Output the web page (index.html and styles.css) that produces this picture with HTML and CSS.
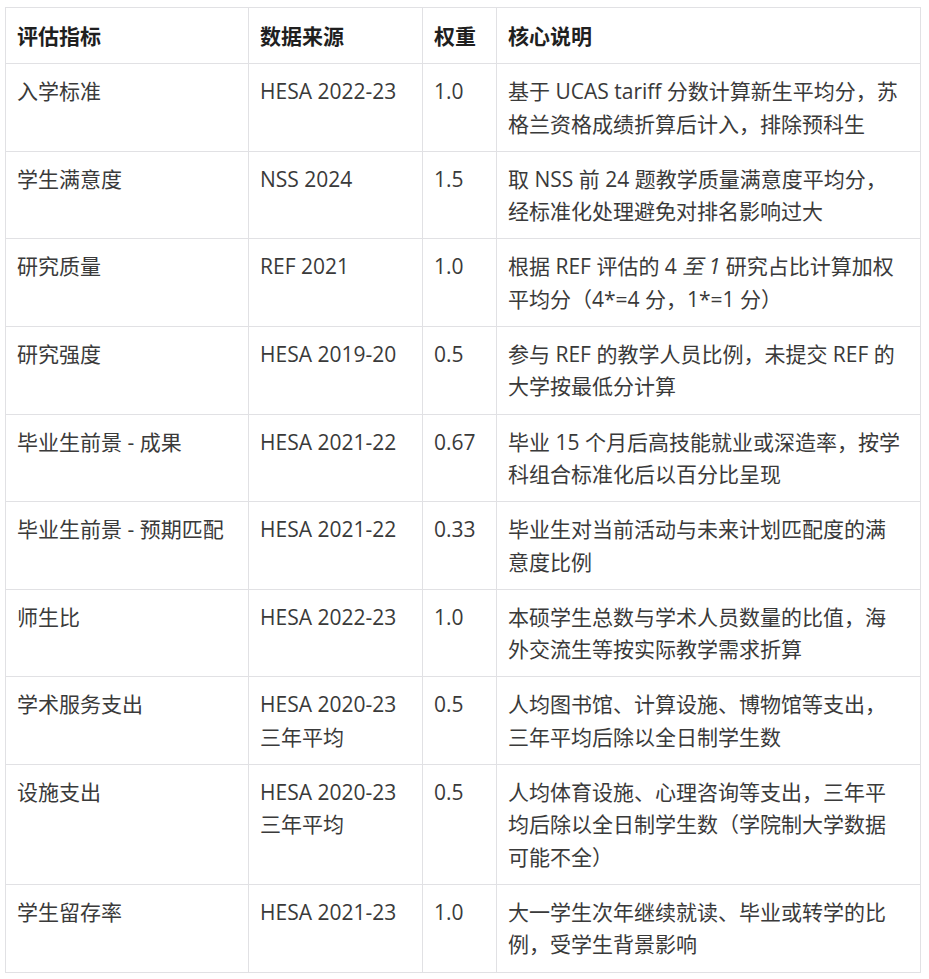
FILE: index.html
```html
<!DOCTYPE html>
<html lang="zh-CN">
<head>
<meta charset="utf-8">
<title>评估指标</title>
<link rel="stylesheet" href="styles.css">
</head>
<body>
<div class="wrap">
<table class="metrics">
  <colgroup>
    <col class="c1"><col class="c2"><col class="c3"><col class="c4">
  </colgroup>
  <thead>
    <tr><th>评估指标</th><th>数据来源</th><th>权重</th><th>核心说明</th></tr>
  </thead>
  <tbody>
    <tr><td>入学标准</td><td>HESA 2022-23</td><td>1.0</td><td>基于 UCAS tariff 分数计算新生平均分，苏<br>格兰资格成绩折算后计入，排除预科生</td></tr>
    <tr><td>学生满意度</td><td>NSS 2024</td><td>1.5</td><td>取 NSS 前 24 题教学质量满意度平均分，<br>经标准化处理避免对排名影响过大</td></tr>
    <tr><td>研究质量</td><td>REF 2021</td><td>1.0</td><td>根据 REF 评估的 4 <em>至 1</em> 研究占比计算加权<br>平均分（4*=4 分，1*=1 分）</td></tr>
    <tr><td>研究强度</td><td>HESA 2019-20</td><td>0.5</td><td>参与 REF 的教学人员比例，未提交 REF 的<br>大学按最低分计算</td></tr>
    <tr><td>毕业生前景 - 成果</td><td>HESA 2021-22</td><td>0.67</td><td>毕业 15 个月后高技能就业或深造率，按学<br>科组合标准化后以百分比呈现</td></tr>
    <tr><td>毕业生前景 - 预期匹配</td><td>HESA 2021-22</td><td>0.33</td><td>毕业生对当前活动与未来计划匹配度的满<br>意度比例</td></tr>
    <tr><td>师生比</td><td>HESA 2022-23</td><td>1.0</td><td>本硕学生总数与学术人员数量的比值，海<br>外交流生等按实际教学需求折算</td></tr>
    <tr><td>学术服务支出</td><td>HESA 2020-23<br>三年平均</td><td>0.5</td><td>人均图书馆、计算设施、博物馆等支出，<br>三年平均后除以全日制学生数</td></tr>
    <tr><td>设施支出</td><td>HESA 2020-23<br>三年平均</td><td>0.5</td><td>人均体育设施、心理咨询等支出，三年平<br>均后除以全日制学生数（学院制大学数据<br>可能不全）</td></tr>
    <tr><td>学生留存率</td><td>HESA 2021-23</td><td>1.0</td><td>大一学生次年继续就读、毕业或转学的比<br>例，受学生背景影响</td></tr>
  </tbody>
</table>
</div>
</body>
</html>
```
FILE: styles.css
```css
html, body {
  margin: 0;
  padding: 0;
  background: #ffffff;
}
.wrap {
  padding: 7px 10px 0 5px;
}
.metrics {
  border-collapse: collapse;
  table-layout: fixed;
  width: 915px;
  font-family: "Open Sans", "Noto Sans CJK SC", sans-serif;
  font-size: 21px;
  line-height: 32.3px;
  color: #3a3a3a;
}
.c1 { width: 243px; }
.c2 { width: 174px; }
.c3 { width: 74px; }
.c4 { width: 424px; }
.metrics th,
.metrics td {
  border: 1px solid #e1e1e4;
  padding: 11px 11px;
  text-align: left;
  vertical-align: top;
  white-space: nowrap;
}
.metrics th {
  font-weight: 700;
  color: #1f1f1f;
  padding-top: 11.5px;
  padding-bottom: 11.5px;
}
.metrics em {
  font-style: italic;
}
```
